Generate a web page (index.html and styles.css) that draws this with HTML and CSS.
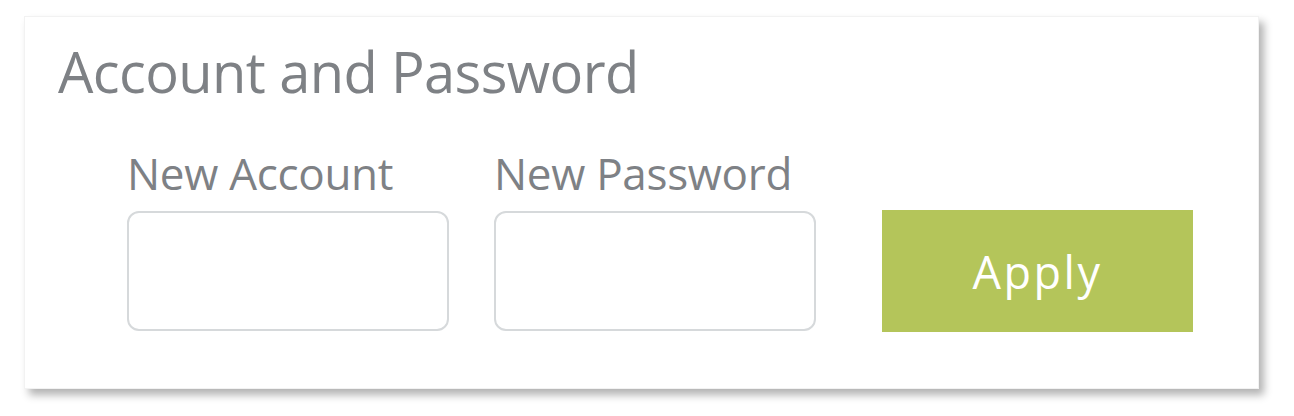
FILE: index.html
```html
<!DOCTYPE html>
<html>
<head>
  <title>Account and Password</title>
  <meta name="viewport" content="width=device-width, initial-scale=1.0">
  <link rel="stylesheet" href="styles.css">
</head>
<body>
  <div class="card">
    <h2 class="card-title">Account and Password</h2>
    <form class="account-form" onsubmit="return false">
      <div class="field">
        <label for="newAccount">New Account</label>
        <input type="text" id="newAccount">
      </div>
      <div class="field">
        <label for="newPassword">New Password</label>
        <input type="password" id="newPassword">
      </div>
      <button type="submit" class="apply-button">Apply</button>
    </form>
  </div>
</body>
</html>
```

FILE: styles.css
```css
/* page */
html, body {
  margin: 0;
  padding: 0;
  background: #ffffff;
}

body {
  font-family: "Open Sans", "Noto Sans", sans-serif;
  color: #7e8185;
  min-height: 416px;
  padding-top: 16px;
  box-sizing: border-box;
}

.card {
  box-sizing: border-box;
  width: 1235px;
  height: 373px;
  margin-left: 24px;
  padding: 26px 0 0 33px;
  background: #ffffff;
  border: 1px solid #f2f2f2;
  box-shadow: 5px 6px 8px rgba(0, 0, 0, 0.3);
}

.card-title {
  margin: 0;
  font-size: 56px;
  font-weight: 400;
  line-height: 1;
  letter-spacing: -0.6px;
}

.account-form {
  display: flex;
  align-items: flex-end;
  margin: 51px 0 0 69px;
}

.field {
  display: flex;
  flex-direction: column;
  margin-right: 45px;
}

.field:last-of-type {
  margin-right: 66px;
}

.field label {
  font-size: 44px;
  line-height: 1;
  letter-spacing: -0.3px;
  margin-top: 1px;
  margin-bottom: 16px;
}

.field input {
  box-sizing: border-box;
  width: 322px;
  height: 120px;
  border: 2px solid #d6d9db;
  border-radius: 12px;
  background: #ffffff;
  outline: none;
}

.apply-button {
  width: 311px;
  height: 122px;
  margin-bottom: -1px;
  border: 0;
  background: #b4c55a;
  color: #ffffff;
  font-family: inherit;
  font-size: 45px;
  letter-spacing: 2.5px;
}
```
